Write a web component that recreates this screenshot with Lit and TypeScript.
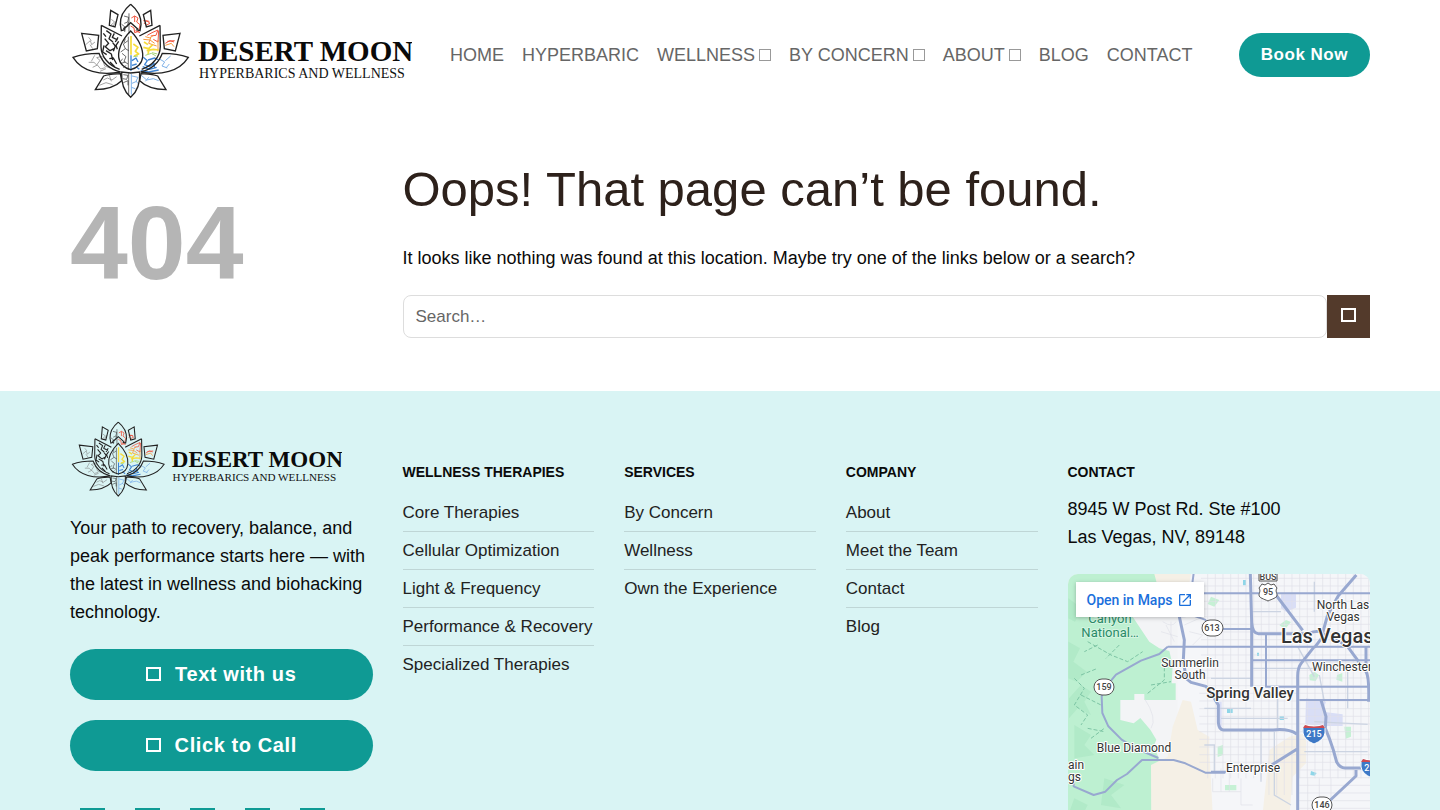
import { LitElement, html, svg, css } from "lit";
import { customElement, property } from "lit/decorators.js";

@customElement("brand-logo")
class BrandLogo extends LitElement {
  static styles = css`
    :host { display: block; }
    .logo { display: block; width: 100%; height: auto; }
    .name { font: bold 29px "Liberation Serif", serif; fill: #0a0a0a; }
    .tag { font: 14px "Liberation Serif", serif; fill: #111; }
    .petal { fill: none; stroke: #222; stroke-width: 4; stroke-linejoin: miter; }
    .vein { fill: none; stroke: #222; stroke-width: 2; stroke-linejoin: round; }
    .bold { stroke-width: 4; }
    .soft { stroke: #777; }
    .red { stroke: #f0553f; stroke-width: 3; }
    .orange { stroke: #f79a3c; stroke-width: 3; }
    .yellow { stroke: #f6dc3a; stroke-width: 5; }
    .green { stroke: #a5d67a; stroke-width: 3; }
    .blue { stroke: #3f84d2; stroke-width: 4; }
    .sky { stroke: #7fb2e8; stroke-width: 3; }
  `;

  render() {
    return html`
      <svg class="logo" viewBox="0 0 342 104" role="img" aria-label="Desert Moon Hyperbarics and Wellness">
        <g transform="translate(-10 -3) scale(0.33333)">
          <path class="vein" d="M192 48l14 4-3 14-10 4M205 66l-3 14-12 4M184 72l12 10-2 14M207 40v60" />
          <path class="vein bold" d="M139 92l14 10-6 14 12 10M163 100l-6 12 16 8M134 116l12 14-10 10 14 12 12-6M158 128l8 10-6 16M138 152l16 10 4 18M174 112l-8 14M148 176l12-2 10 18M130 100l8 10M176 124l-8 12 4 12M132 136l-4 20 12 8M150 186l14 14" />
          <path class="vein" d="M204 122l-14 10 6 14-14 10M196 146l10 6M186 160l12 10-6 14 12 8M184 190l12-4M205 110v100M196 116l-4 12M188 176l-6 8M198 196l-8 8" />
          <path class="vein soft" d="M77 134l14-12 4 12 10-8M90 134l8 12M86 112l8 10M86 187h16l8 8 10-14-10-8 16-4 12 10M98 202l14-7 10 12 14-4M126 174l8 24 16 6M104 166l-10 18M120 214l18-8" />
          <path class="vein soft" d="M154 58l10 8-12 10M170 62l-12 18M130 240l12-6 14 6 14-10M118 256l20-8 20 6M148 226l6 18" />
          <path class="vein" d="M190 224l14 2-4 12-12-2M190 248l14-6v14M206 220v66" />
          <path class="vein red" d="M214 54l10-6 10 6-4 12 10 8-4 20-12 4-2-14-10-6M224 48v18M252 72l8-10 10 8-12 6M250 62l18 2M240 98l-14-6M262 106l14-8 18-8-6 16-16 2M296 92l-2 34-14-8M316 130l14-8 12 4M322 124l22-2" />
          <path class="vein orange" d="M256 110l14 4 10-8M250 118l20 2 14 10M272 114l-6 16 24 8M316 136l18-6 8 10M294 120v34" />
          <path class="vein yellow" d="M213 108v56M220 132l14 10-8 12 10 8-14 6M250 142l16 4 12-12M260 152l20-4 16 2M268 146l-4 16M252 126l12 8" />
          <path class="vein green" d="M256 166l18-6 14 8M220 170l14-2M276 158l16 4" />
          <path class="vein blue" d="M213 166v46M216 182l12-8 6 12M216 196l14-4M250 172l12 10-8 12 14 6 16-10M264 180l20-6 12 6M248 200l20 8 22-6M280 186l4 18M242 212l24 4 30-6M228 200l10 8" />
          <path class="vein sky" d="M300 178l14 8-8 12 16 6M316 182l16-14M318 204l10-12M214 222v62M216 228l18 4-6 12 8 8M216 250l14-6M244 226l16 14 20-4 16 6M256 244l10-12M214 262l12 4" />
          <path class="petal" d="M212 13C190 31 180 52 181 74l3 18 11-3M212 13c22 18 32 39 31 61l-3 18-11-3" />
          <path class="petal" d="M152 31l22 13-9 37-17-5zM272 31l-22 13 9 37 17-5z" />
          <path class="petal" d="M65 100l51 6-4 40-33 7zM360 100l-51 6 4 40 33 7z" />
          <path class="petal" d="M124 76l62 32M124 76l-1 64c1 30 22 56 56 68M300 76l-62 32M300 76l1 64c-1 30-22 56-56 68" />
          <path class="petal" d="M212 93c-28 28-38 58-36 78 2 20 17 34 36 38 19-4 34-18 36-38 2-20-8-50-36-78z" />
          <path class="petal" d="M190 88l22-20 22 20" />
          <path class="petal" d="M39 172c25-9 50-12 78-12 11 30 31 48 65 56-62 12-116-2-143-44zM385 172c-25-9-50-12-78-12-11 30-31 48-65 56 62 12 116-2 143-44z" />
          <path class="petal" d="M106 269l25-41c17-7 38-6 50-7l4 21c-20 20-48 26-79 27zM318 269l-25-41c-17-7-38-6-50-7l-4 21c20 20 48 26 79 27z" />
          <path class="petal" d="M185 216c-2 32 5 57 27 76 22-19 29-44 27-76l-27 3z" />
        </g>
        <text class="name" x="128" y="58">DESERT MOON</text>
        <text class="tag" x="129" y="75">HYPERBARICS AND WELLNESS</text>
      </svg>
    `;
  }
}

@customElement("box-icon")
class BoxIcon extends LitElement {
  static styles = css`
    :host { display: inline-block; }
    .box { box-sizing: border-box; width: 15px; height: 14px; border: 2px solid currentColor; }
    .small { width: 12px; height: 12px; border-width: 1px; }
    .large { width: 25px; height: 25px; }
  `;

  @property() size = "medium";

  render() {
    return html`<div class="box ${this.size}"></div>`;
  }
}

const minorX = Array.from({ length: 22 }, (_, i) => 440 + i * 23);
const minorY = Array.from({ length: 36 }, (_, i) => 40 + i * 23);

@customElement("area-map")
class AreaMap extends LitElement {
  static styles = css`
    :host { display: block; position: relative; border-radius: 10px; overflow: hidden; }
    .map { display: block; width: 100%; height: 300px; background: #f3f4f6; }
    .park { fill: #bdf0d1; }
    .shade { fill: #a5e3bf; opacity: 0.5; }
    .sand { fill: #f5f0e6; }
    .zone { fill: #d9def6; }
    .pond { fill: #8fd6e8; }
    .lawn { fill: #c6f1d5; }
    .city { fill: #f5f6f9; }
    .minor { fill: none; stroke: #dfe1e8; stroke-width: 2; }
    .trail { fill: none; stroke: #7cc4a4; stroke-width: 3; stroke-dasharray: 12 6; }
    .local { fill: none; stroke: #ccd4e2; stroke-width: 4; }
    .road { fill: none; stroke: #98a8d0; stroke-width: 6; stroke-linejoin: round; }
    .wide { stroke-width: 9; }
    .label { font-family: Roboto, sans-serif; font-size: 12px; fill: #333; stroke: #fff; stroke-width: 2px; paint-order: stroke; stroke-linejoin: round; text-anchor: middle; }
    .start { text-anchor: start; }
    .green { fill: #2b8a68; stroke: #d5f5e2; font-size: 13px; }
    .town { font-size: 15px; font-weight: 500; }
    .capital { font-size: 20px; font-weight: 500; }
    .badge { fill: #fff; stroke: #555; stroke-width: 1; }
    .number { font: 500 9px Roboto, sans-serif; fill: #444; text-anchor: middle; }
    .interstate { fill: #3d78c6; stroke: #fff; stroke-width: 1; }
    .crown { fill: #cf4a50; }
    .light { fill: #fff; }
    .open { position: absolute; left: 8px; top: 8px; display: flex; align-items: center; gap: 4px; height: 35px; padding: 0 11px; background: #fff; box-shadow: 0 1px 4px rgba(0, 0, 0, 0.25); color: #1a6fdc; font: 500 14px Roboto, sans-serif; text-decoration: none; }
    .out { width: 16px; height: 16px; fill: currentColor; }
  `;

  render() {
    return html`
      <svg class="map" viewBox="0 0 303 300" preserveAspectRatio="xMinYMin slice" role="img" aria-label="Map of Las Vegas">
        <g transform="translate(-7 -9) scale(0.33333)">
          <rect class="city" x="350" y="20" width="600" height="920" />
          <path class="park" d="M0 0H290l25 60-60 70-40 25 50 75 30 20 30 8 10 42-3 55h12v50h-94v-18h-30v18h-42v60l40 10 20-16 30 35 18 30-8 20 22 50-28 20v350H0z" />
          <path class="shade" d="M22 100l40 30-20 40-20-10zM22 230l35 20-20 40 40 30-30 30-25-10zM60 360l30 20-20 30 20 40-40-20-26 30v-60zM40 480l50 30-20 30 30 30-60 10zM130 640l60 20-40 30 30 40-60-10zM40 700l40 20-20 40-38-10z" />
          <path class="sand" d="M280 27h110l-8 45h-90zM365 405l25 5 20 85 35 20v40l10 190h150l20-190 60-40 50-10v90l-40 40-10 120h50v80l-20 100H272l-2-335 50-25 15-90z" />
          <path class="zone" d="M660 88h45v40l-30 12-15-10zM735 400l60 10-10 30 60 8v35h-60l-52-5zM470 410h12v90l-12-12z" />
          <path class="lawn" d="M450 95l25 10-15 20-20-8zM655 180l20-15 15 6-18 22zM745 330l15-10 14 10-10 18-18-2zM828 330l16-6v26l-18-6zM850 485h20v30l-16 6zM470 545l16-5v30l-16 6zM492 660h34v16h-34zM355 110l20-14 18 14-10 14z" />
          <path class="pond" d="M498 430h17v14h-17zM656 453h13v12h-13zM750 618l17 6-6 8-13-2zM546 45h9v16h-9zM588 263h6v10h-6z" />
          ${minorX.map((x) => svg`<path class="minor" d="M${x} 27V${x < 700 && x > 620 ? 690 : 640}" />`)}
          ${minorY.filter((y) => y < 600).map((y) => svg`<path class="minor" d="M${y < 300 ? 420 : 415} ${y}H930" />`)}
          ${minorY.filter((y) => y >= 600).map((y) => svg`<path class="minor" d="M715 ${y}H930" />`)}
          <path class="minor" d="M740 640V900M775 640V900M810 640V900M455 640V680H540M540 640V720H575M480 610V680M505 610V680" />
          <path class="minor" d="M305 170q30 20 40 0M300 200l50 15M330 170v70M315 180l25 50M380 90l40 50M370 180l45-20M385 200l40 10-30 30M250 400q40 60 20 90" />
          <path class="trail" d="M80 230l70 40 50 20 45-30M40 340l30 30-30 50 40 30-20 30M110 240l-40 20M260 385l50-40v-40M270 360l60-10M60 390l60 30M80 490l50 10M90 520l40-30M175 240l-40 40M60 330l50-20" />
          <path class="local" d="M570 140h90M575 310h340M600 490v160M640 500v190l50 30M710 245l50 90M450 340h120M480 460h200M730 560h190M860 300v130M760 50v90M430 430h140M650 400v90M760 470l160 8M775 330l15 80M430 540h30v80" />
          <path class="road" d="M398 25l-6 45 35 15H930M320 245l-25 22-55 20-75 42-25 30-18 35 2 50 18 40 40 40 40 25 70 30M320 245H930M38 650v14l60 26 35-10 35-35 30-18 45-42h95l35 10 60 28h60M570 192h-110l-28-28-35-12-40 2M615 207v158h315M450 620h45M575 286h355M715 405h215" />
          <path class="road wide" d="M355 155l15 70-3 60 8 55 15 12 45 12 15 20 22 36v52q2 22 15 23h150q45-5 70 12M568 27l4 145q3 34 20 34h150q20-10 44-6l14-50 32-58 54-62M645 90l80 106M572 170v195M760 245l-38 48q-12 15-12 40v480M712 550l-80 50M780 405l15 50-2 35 12 30 12 35 10 36q10 18 25 18h68M885 615v18l-80 75M860 245l55 75q10 15 8 90M915 245v60M793 205l-32 42M850 240l-30-25" />
        </g>
        <text class="label green" x="42" y="49">Canyon</text>
        <text class="label green" x="42" y="63">National…</text>
        <text class="label" x="122" y="93">Summerlin</text>
        <text class="label" x="122" y="105">South</text>
        <text class="label" x="275" y="35">North Las</text>
        <text class="label" x="275" y="47">Vegas</text>
        <text class="label start capital" x="213" y="69">Las Vegas</text>
        <text class="label start" x="244" y="97">Winchester</text>
        <text class="label town" x="182" y="124">Spring Valley</text>
        <text class="label" x="66" y="178">Blue Diamond</text>
        <text class="label" x="185" y="198">Enterprise</text>
        <text class="label start" x="0" y="195">ain</text>
        <text class="label start" x="0" y="207">gs</text>
        <rect class="badge" x="26" y="105" width="20" height="16" rx="8" />
        <text class="number" x="36" y="116">159</text>
        <rect class="badge" x="134" y="46" width="21" height="16" rx="8" />
        <text class="number" x="144" y="57">613</text>
        <rect class="badge" x="244" y="223" width="20" height="16" rx="8" />
        <text class="number" x="254" y="234">146</text>
        <path class="badge" d="M191-4h18v11h-18z" />
        <text class="number" x="200" y="6">BUS</text>
        <path class="badge" d="M194 10l3 1 3-2 3 2 3-1 3 4c-2 3 0 5 0 7 0 3-5 4-9 6-4-2-9-3-9-6 0-2 2-4 0-7z" />
        <text class="number" x="200" y="21">95</text>
        <path class="interstate" d="M237 151q9 3 18 0 3 3 2 8-1 7-11 11-10-4-11-11-1-5 2-8z" />
        <path class="crown" d="M237 151q9 3 18 0l2 3h-22z" />
        <text class="number light" x="246" y="163">215</text>
        <path class="interstate" d="M295 185q9 3 18 0 3 3 2 8-1 7-11 11-10-4-11-11-1-5 2-8z" />
        <path class="crown" d="M295 185q9 3 18 0l2 3h-22z" />
        <text class="number light" x="304" y="197">215</text>
      </svg>
      <a class="open" href="#map">Open in Maps
        <svg class="out" viewBox="0 0 24 24" aria-hidden="true"><path d="M19 19H5V5h7V3H5a2 2 0 0 0-2 2v14a2 2 0 0 0 2 2h14a2 2 0 0 0 2-2v-7h-2v7zM14 3v2h3.59l-9.83 9.83 1.41 1.41L19 6.41V10h2V3h-7z" /></svg>
      </a>
    `;
  }
}

const nav = [
  { label: "HOME" },
  { label: "HYPERBARIC" },
  { label: "WELLNESS", menu: true },
  { label: "BY CONCERN", menu: true },
  { label: "ABOUT", menu: true },
  { label: "BLOG" },
  { label: "CONTACT" },
];

const columns = [
  { title: "WELLNESS THERAPIES", links: ["Core Therapies", "Cellular Optimization", "Light & Frequency", "Performance & Recovery", "Specialized Therapies"] },
  { title: "SERVICES", links: ["By Concern", "Wellness", "Own the Experience"] },
  { title: "COMPANY", links: ["About", "Meet the Team", "Contact", "Blog"] },
];

const social = ["Facebook", "Instagram", "TikTok", "Email", "YouTube"];

@customElement("app-root")
class AppRoot extends LitElement {
  static styles = css`
    :host { display: block; min-height: 100vh; background: #fff; color: #0a0a0a; font: 18px/28px "Liberation Sans", Arial, sans-serif; }
    * { box-sizing: border-box; }
    h1, h2, p, ul { margin: 0; padding: 0; }
    ul { list-style: none; }
    a { color: inherit; text-decoration: none; }
    .wrap { max-width: 1440px; margin: 0 auto; padding: 0 70px; }
    .grid { display: grid; grid-template-columns: repeat(12, minmax(0, 1fr)); column-gap: 30px; }
    .three { grid-column: span 3; }
    .two { grid-column: span 2; }
    .nine { grid-column: span 9; }
    .header { display: flex; align-items: center; min-height: 110px; }
    .home { flex: none; width: 342px; margin-right: 38px; }
    .nav { display: flex; gap: 18px; flex: 1; color: #666; }
    .item { display: flex; align-items: center; gap: 4px; white-space: nowrap; }
    .caret { color: #999; }
    .pill { display: flex; align-items: center; justify-content: center; border: 0; border-radius: 99px; background: #0f9a94; color: #fff; font: bold 17px "Liberation Sans", Arial, sans-serif; letter-spacing: 0.03em; white-space: nowrap; cursor: pointer; }
    .book { height: 44px; padding: 0 22px; }
    .wideButton { width: 100%; height: 51px; gap: 14px; font-size: 20px; }
    .main { padding-top: 47px; padding-bottom: 53px; }
    .code { padding-top: 34px; font-size: 104px; line-height: 104px; font-weight: bold; color: #b5b5b5; }
    .title { font-size: 49px; line-height: 64px; font-weight: normal; color: #2d211b; }
    .intro { margin: 23px 0; }
    .search { display: flex; }
    .field { flex: 1; min-width: 0; height: 43px; padding: 0 12px; border: 1px solid #ddd; border-radius: 8px; background: #fff; font: 17px "Liberation Sans", Arial, sans-serif; color: #333; }
    .field::placeholder { color: #666; opacity: 1; }
    .go { display: grid; place-items: center; width: 43px; height: 43px; padding: 0 0 4px; border: 0; background: #533a2b; color: #fff; }
    .footer { background: #d9f4f4; padding: 30px 0; }
    .footLogo { width: 272px; margin-bottom: 10px; }
    .buttons { display: grid; gap: 20px; margin: 23px 0 37px; }
    .social { display: flex; gap: 30px; padding-left: 10px; color: #0f9a94; }
    .list { padding-top: 40px; }
    .heading { font-size: 14px; line-height: 22px; margin-bottom: 11px; }
    .entry { height: 38px; line-height: 38px; border-bottom: 1px solid #bfd6d6; font-size: 17px; color: #222; white-space: nowrap; }
    .entry:last-child { border-bottom: 0; }
    .address { font-style: normal; margin: 12px 0 23px; }
  `;

  render() {
    return html`
      <header class="wrap header">
        <a class="home" href="#home" aria-label="Desert Moon home"><brand-logo></brand-logo></a>
        <nav class="nav">
          ${nav.map((n) => html`<a class="item" href="#">${n.label}${n.menu ? html`<box-icon class="caret" size="small"></box-icon>` : ""}</a>`)}
        </nav>
        <button class="pill book">Book Now</button>
      </header>
      <main class="wrap">
        <div class="main grid">
          <div class="three code">404</div>
          <div class="nine">
            <h1 class="title">Oops! That page can’t be found.</h1>
            <p class="intro">It looks like nothing was found at this location. Maybe try one of the links below or a search?</p>
            <form class="search" role="search">
              <input class="field" type="search" aria-label="Search" placeholder="Search…" />
              <button class="go" type="button" aria-label="Submit"><box-icon></box-icon></button>
            </form>
          </div>
        </div>
      </main>
      <footer class="footer">
        <div class="wrap grid">
          <div class="three">
            <brand-logo class="footLogo"></brand-logo>
            <p>Your path to recovery, balance, and peak performance starts here — with the latest in wellness and biohacking technology.</p>
            <div class="buttons">
              <button class="pill wideButton"><box-icon></box-icon>Text with us</button>
              <button class="pill wideButton"><box-icon></box-icon>Click to Call</button>
            </div>
            <div class="social">
              ${social.map((s) => html`<a href="#" aria-label=${s}><box-icon size="large"></box-icon></a>`)}
            </div>
          </div>
          ${columns.map((c) => html`
            <nav class="two list">
              <h2 class="heading">${c.title}</h2>
              <ul>${c.links.map((l) => html`<li class="entry"><a href="#">${l}</a></li>`)}</ul>
            </nav>`)}
          <div class="three list">
            <h2 class="heading">CONTACT</h2>
            <address class="address">8945 W Post Rd. Ste #100<br />Las Vegas, NV, 89148</address>
            <area-map></area-map>
          </div>
        </div>
      </footer>
    `;
  }
}
